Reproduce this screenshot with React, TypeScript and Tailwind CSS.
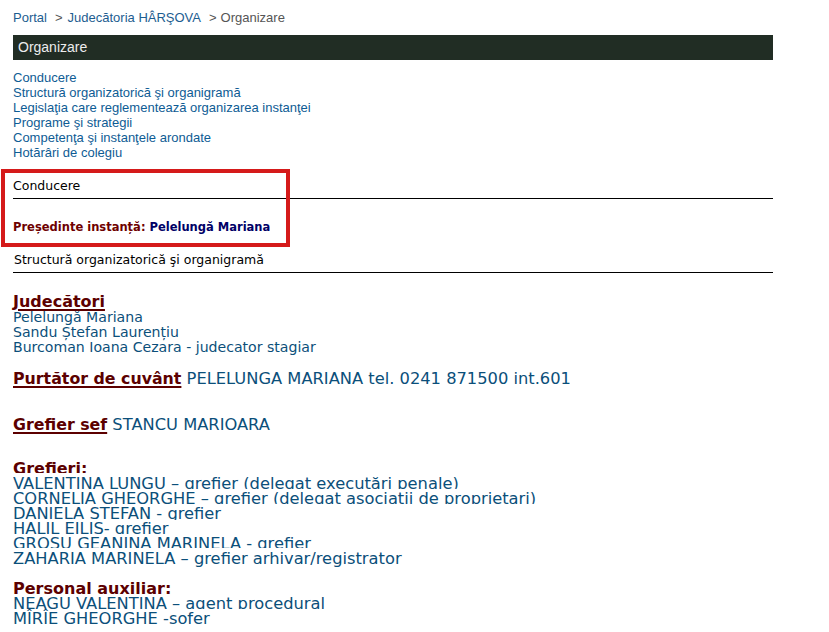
import React from "react";

const dv = "font-['DejaVu_Sans',Verdana,sans-serif]";
const arial = "font-['Liberation_Sans',Arial,sans-serif]";

function Clip({ h, children, className = "" }: { h: number; children: React.ReactNode; className?: string }) {
  return (
    <div className="h-[15px] overflow-visible">
      <div className={"overflow-hidden whitespace-nowrap " + className} style={{ height: h }}>
        {children}
      </div>
    </div>
  );
}

export default function App() {
  const links = [
    "Conducere",
    "Structură organizatorică şi organigramă",
    "Legislaţia care reglementează organizarea instanţei",
    "Programe şi strategii",
    "Competenţa şi instanţele arondate",
    "Hotărâri de colegiu",
  ];
  const grefieri: [string, number][] = [
    ["VALENTINA LUNGU – grefier (delegat executări penale)", 13],
    ["CORNELIA GHEORGHE – grefier (delegat asociații de proprietari)", 13],
    ["DANIELA STEFAN - grefier", 14],
    ["HALIL EILIS-  grefier", 13],
    ["GROSU GEANINA MARINELA - grefier", 12],
    ["ZAHARIA MARINELA – grefier arhivar/registrator", 18],
  ];
  return (
    <div className="relative min-h-[632px] w-[829px] bg-white">
      <div className="pl-[13px] w-[773px]">
        {/* breadcrumb */}
        <div className={`${arial} flex h-[35px] pt-[10px] text-[13px] leading-[15px]`}>
          <span className="text-[#1d5d90]">Portal</span>
          <span className="ml-[8px] text-[#555]">&gt;</span>
          <span className="ml-[5px] text-[#1d5d90]">Judecătoria HÂRŞOVA</span>
          <span className="ml-[8px] text-[#555]">&gt;</span>
          <span className="ml-[4px] text-[#555]">Organizare</span>
        </div>
        {/* header bar */}
        <div className={`${arial} h-[25px] bg-[#212d24] pl-[5px] text-[14px] leading-[25px] text-[#ececec]`}>
          Organizare
        </div>
        {/* links */}
        <div className={`${arial} mt-[10px] flex flex-col text-[13px] leading-[15px] text-[#0e5c94]`}>
          {links.map((l) => (
            <span key={l}>{l}</span>
          ))}
        </div>
        {/* Conducere */}
        <div className={`${dv} border-b border-black pb-[4px] pt-[18px] text-[12.5px] leading-[16px] text-[#000]`}>
          Conducere
        </div>
        <div className={`${dv} pt-[20px] text-[11.5px] font-bold leading-[16px]`}>
          <span className="text-[#6e0000]">Președinte instanță: </span>
          <span className="text-[#000066]">Pelelungă Mariana</span>
        </div>
        <div className={`${dv} border-b border-black pb-[4px] pl-[1px] pt-[17px] text-[12.5px] leading-[16px] text-[#000]`}>
          Structură organizatorică şi organigramă
        </div>

        {/* Judecatori */}
        <div className={`${dv} mt-[21px]`}>
          <div className="h-[16px] text-[16px] font-bold leading-[16px] text-[#5c0000] underline decoration-2 underline-offset-[2px]">
            Judecători
          </div>
          <div className="flex flex-col text-[14.1px] leading-[15px] text-[#0b4f7a]">
            <span>Pelelungă Mariana</span>
            <span>Sandu Ștefan Laurențiu</span>
            <span>Burcoman Ioana Cezara - judecator stagiar</span>
          </div>
          <div className="mt-[15px] h-[18px] text-[15.8px] leading-[18px] whitespace-nowrap">
            <span className="font-bold text-[#5c0000] underline decoration-2 underline-offset-[2px]">Purtător de cuvânt</span>
            <span className="text-[16.3px] text-[#0b4f7a]"> PELELUNGA MARIANA tel. 0241 871500 int.601</span>
          </div>
          <div className="mt-[28px] h-[18px] text-[15.8px] leading-[18px] whitespace-nowrap">
            <span className="font-bold text-[#5c0000] underline decoration-2 underline-offset-[2px]">Grefier sef</span>
            <span className="text-[16.3px] text-[#0b4f7a]"> STANCU MARIOARA</span>
          </div>

          <div className="mt-[27px] text-[16.3px] leading-[16px]">
            <Clip h={12} className="text-[16px] font-bold text-[#5c0000]">Grefieri:</Clip>
            {grefieri.map(([t, h]) => (
              <Clip key={t} h={h} className="text-[#0b4f7a]">
                {t}
              </Clip>
            ))}
            <div className="h-[15px]" />
            <Clip h={13} className="text-[16px] font-bold text-[#5c0000]">Personal auxiliar:</Clip>
            <Clip h={13} className="text-[#0b4f7a]">NEAGU VALENTINA – agent procedural</Clip>
            <div className="h-[18px] whitespace-nowrap text-[#0b4f7a]">MÎRÎE GHEORGHE -sofer</div>
          </div>
        </div>
      </div>
      {/* red highlight box */}
      <div className="absolute left-[1px] top-[169px] h-[78px] w-[289px] border-4 border-[#d51a1a]" />
    </div>
  );
}
